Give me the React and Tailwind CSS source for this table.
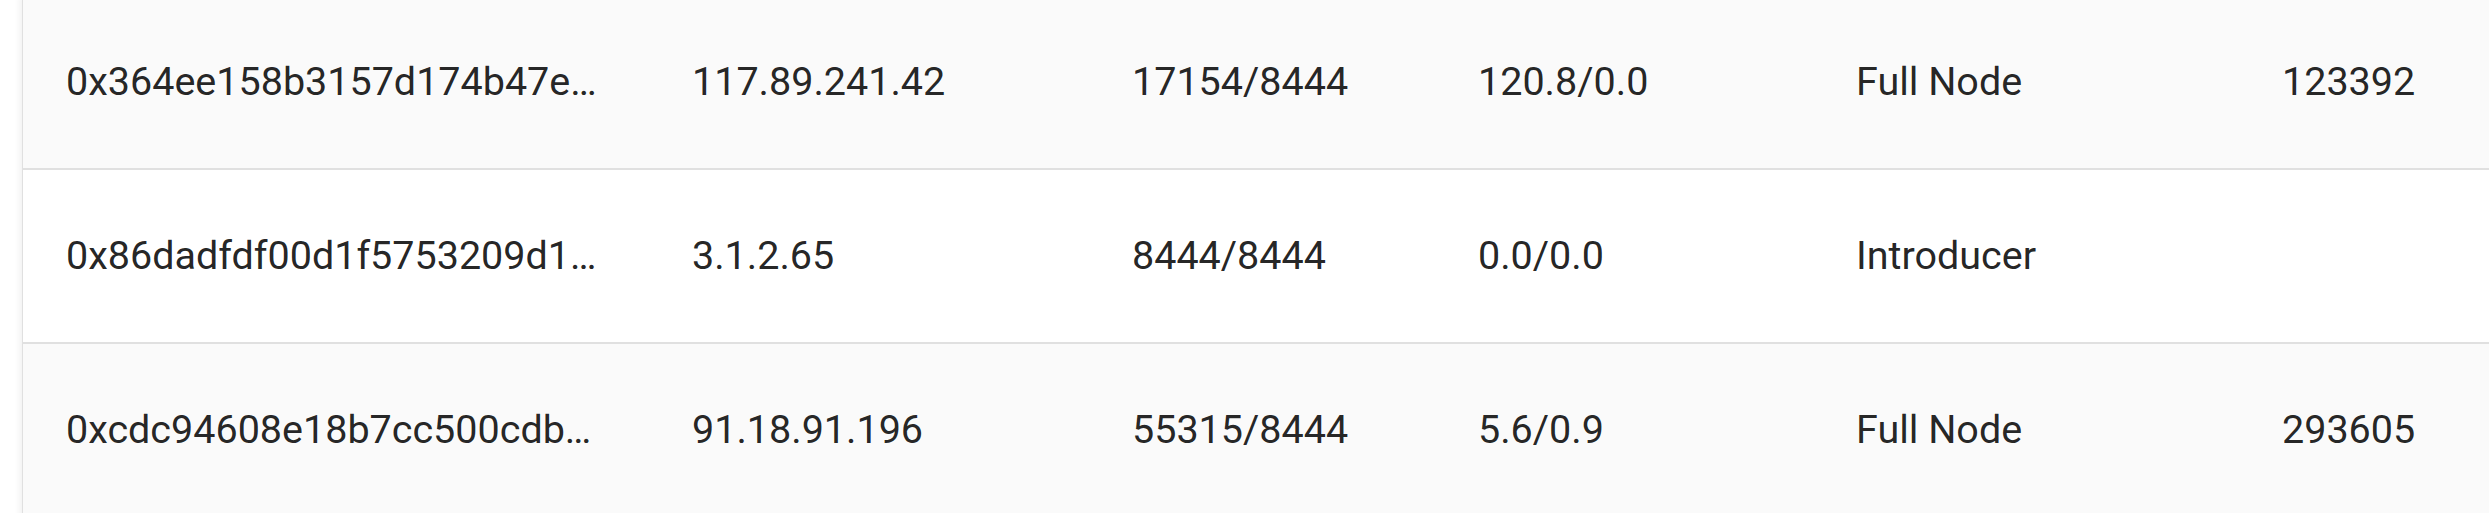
const ROWS = [
  {
    id: "0x364ee158b3157d174b47e…",
    ip: "117.89.241.42",
    ports: "17154/8444",
    speed: "120.8/0.0",
    type: "Full Node",
    height: "123392",
  },
  {
    id: "0x86dadfdf00d1f5753209d1…",
    ip: "3.1.2.65",
    ports: "8444/8444",
    speed: "0.0/0.0",
    type: "Introducer",
    height: "",
  },
  {
    id: "0xcdc94608e18b7cc500cdb…",
    ip: "91.18.91.196",
    ports: "55315/8444",
    speed: "5.6/0.9",
    type: "Full Node",
    height: "293605",
  },
];

const COLS = ["id", "ip", "ports", "speed", "type", "height"];

export default function App() {
  return (
    <div className="w-[2489px] h-[513px] overflow-hidden bg-white pl-[22px] font-['Roboto',sans-serif]">
      {/* table paper */}
      <div className="-mt-1 border-l border-[#e0e0e0] shadow-[-3px_0_6px_rgba(0,0,0,0.05)]">
        {ROWS.map((row, i) => (
          <div
            key={row.id}
            className={
              "grid grid-cols-[626px_440px_346px_378px_426px_1fr] h-[174px] border-b-2 border-[#e0e0e0] " +
              (i % 2 === 0 ? "bg-[#fafafa]" : "bg-white")
            }
          >
            {COLS.map((c) => (
              <div
                key={c}
                className="flex items-center pl-[43px] text-[39.5px] leading-none text-[rgba(0,0,0,0.87)] whitespace-nowrap overflow-hidden"
              >
                {row[c]}
              </div>
            ))}
          </div>
        ))}
      </div>
    </div>
  );
}
